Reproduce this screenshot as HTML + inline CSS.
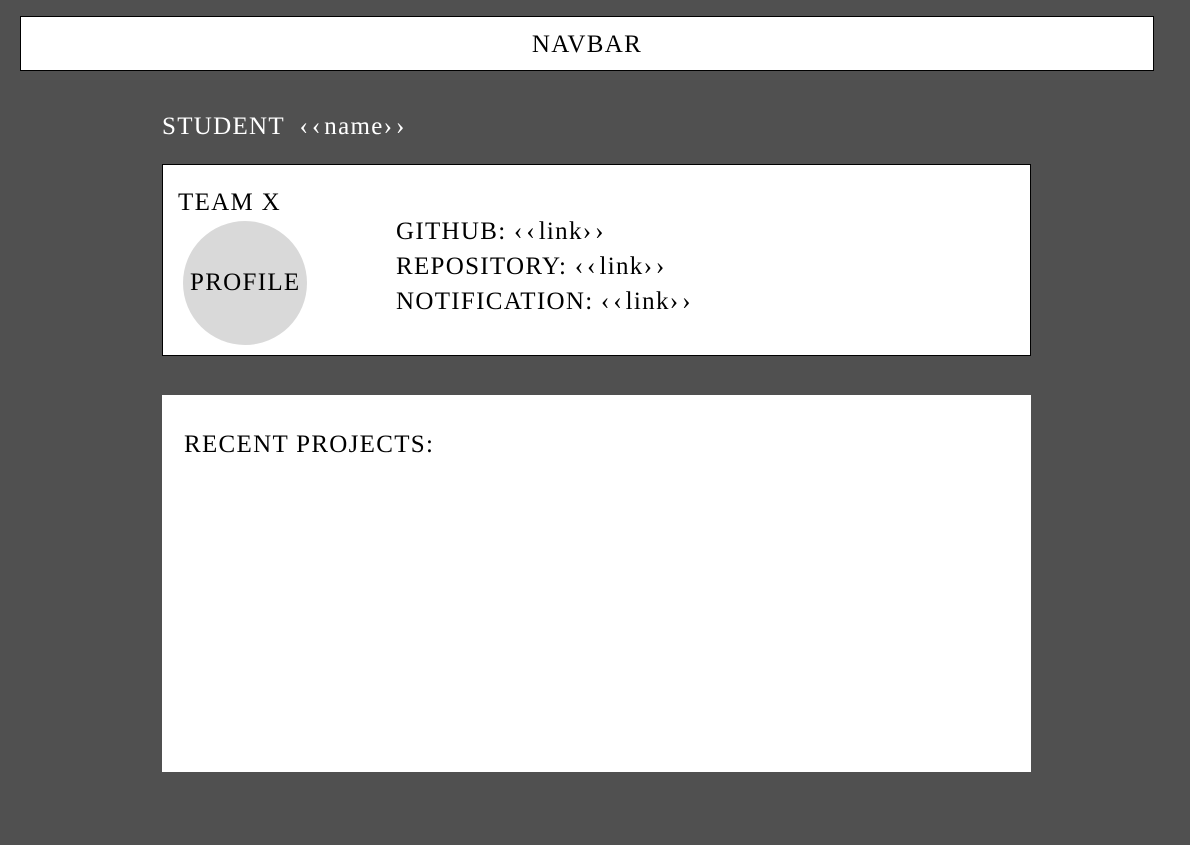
<!DOCTYPE html>
<html><head><style>
body{margin:0;width:1190px;height:845px;background:#505050;position:relative;overflow:hidden;font-family:"Liberation Serif","DejaVu Serif",serif;color:#000}
div{position:absolute;box-sizing:border-box}
.t{white-space:nowrap;font-size:25px;line-height:1;letter-spacing:1.3px}
.g{letter-spacing:4px}
</style></head><body>
<div style="left:20px;top:16px;width:1134px;height:55px;background:#fff;border:1px solid #000"></div>
<div class="t" style="left:0;width:1174px;text-align:center;top:32px">NAVBAR</div>
<div class="t" style="left:162px;top:114px;color:#fff">STUDENT &nbsp;<span class="g">‹‹</span>name<span class="g">››</span></div>
<div style="left:162px;top:164px;width:869px;height:192px;background:#fff;border:1px solid #000"></div>
<div class="t" style="left:178px;top:190px">TEAM X</div>
<div style="left:183px;top:221px;width:124px;height:124px;border-radius:50%;background:#d9d9d9"></div>
<div class="t" style="left:190px;top:270px">PROFILE</div>
<div class="t" style="left:396px;top:214px;line-height:35px">GITHUB: <span class="g">‹‹</span>link<span class="g">››</span><br>REPOSITORY: <span class="g">‹‹</span>link<span class="g">››</span><br>NOTIFICATION: <span class="g">‹‹</span>link<span class="g">››</span></div>
<div style="left:162px;top:395px;width:869px;height:377px;background:#fff"></div>
<div class="t" style="left:184px;top:432px">RECENT PROJECTS:</div>
</body></html>
